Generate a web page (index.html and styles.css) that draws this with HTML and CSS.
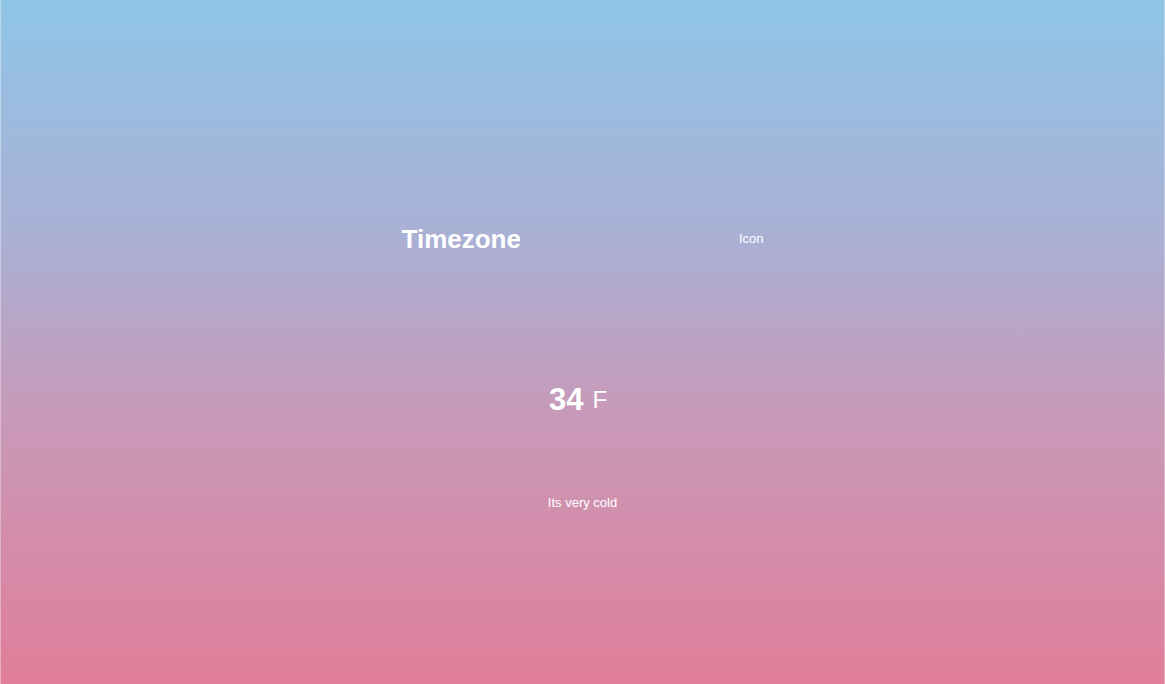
FILE: index.html
```html
<!DOCTYPE html>
<html>
<head>
<meta charset="utf-8">
<title>Weather</title>
<link rel="stylesheet" href="styles.css">
</head>
<body>
<main class="app">
  <div class="location">
    <h1 class="timezone">Timezone</h1>
    <div class="icon">Icon</div>
  </div>
  <div class="temperature">
    <div class="degree-section">
      <h2 class="degree">34</h2>
      <span class="unit">F</span>
    </div>
    <div class="description">Its very cold</div>
  </div>
</main>
</body>
</html>
```
FILE: styles.css
```css
html, body {
  margin: 0;
  padding: 0;
  height: 100%;
}
body {
  font-family: "Liberation Sans", Arial, sans-serif;
  color: #ffffff;
  background: linear-gradient(to bottom, #8fc5e7 0%, #aab0d4 35%, #c79ab9 60%, #e07e9a 100%);
  box-shadow: inset 1px 0 0 rgba(255,255,255,0.35), inset -1px 0 0 rgba(255,255,255,0.35);
  overflow: hidden;
}
.app {
  height: 684px;
  display: flex;
  flex-direction: column;
  align-items: center;
}
.location {
  width: 362px;
  display: flex;
  justify-content: space-between;
  align-items: center;
  margin-top: 224px;
}
.timezone {
  margin: 0;
  font-size: 26px;
  font-weight: bold;
  line-height: 30px;
}
.icon {
  font-size: 13px;
  line-height: 16px;
}
.temperature {
  display: flex;
  flex-direction: column;
  align-items: center;
  margin-top: 128px;
}
.degree-section {
  display: flex;
  align-items: center;
  gap: 9px;
  margin-right: 9px;
}
.degree {
  margin: 0;
  font-size: 31px;
  font-weight: bold;
  line-height: 36px;
}
.unit {
  font-size: 24px;
  line-height: 28px;
}
.description {
  margin-top: 77px;
  font-size: 13px;
  line-height: 16px;
}
```
